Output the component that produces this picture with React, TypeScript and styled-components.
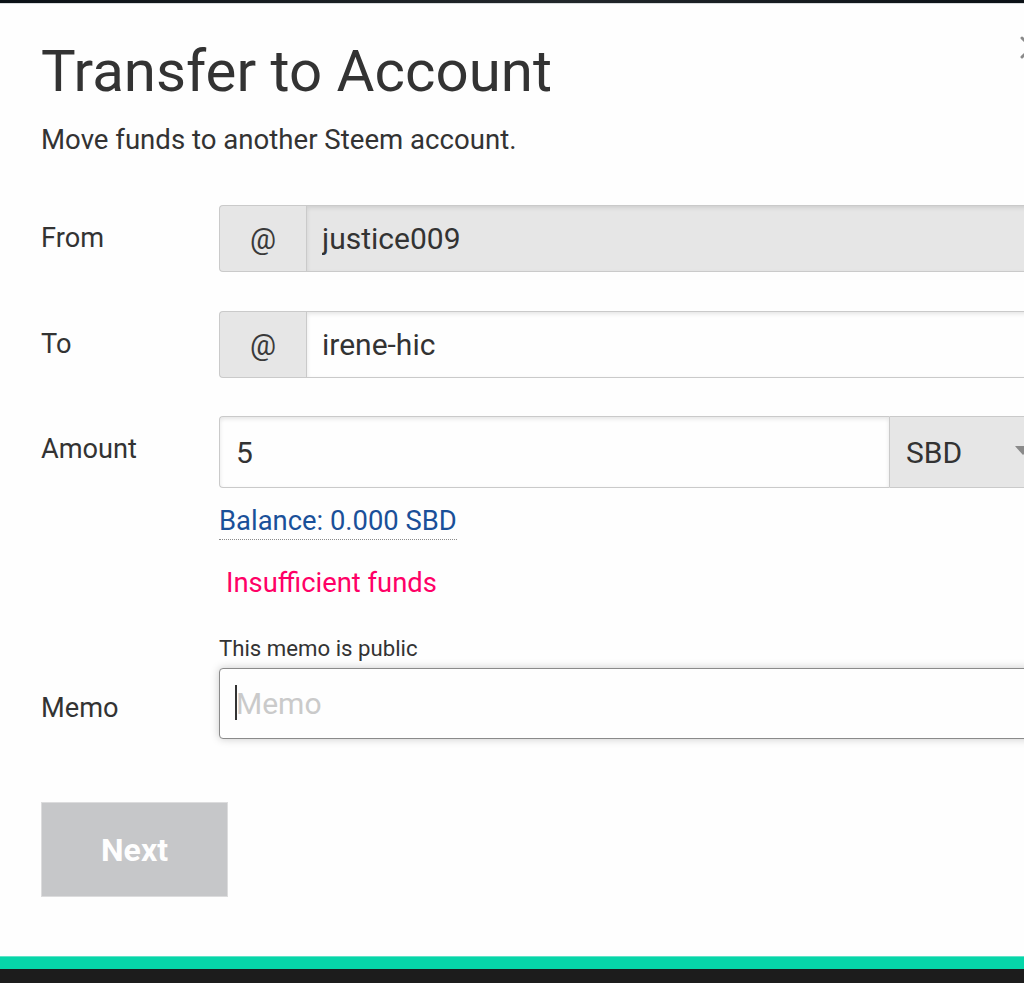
import React from "react";
import styled, { createGlobalStyle } from "styled-components";

function App() {
  return (
    <>
      <GlobalStyle />
      <Page>
        <TopStrip />
        <Modal>
          <CloseButton aria-label="Close">
            <svg width="26" height="26" viewBox="0 0 26 26">
              <path
                d="M3 4 L22 23 M3 23 L22 4"
                stroke="#8a8a8a"
                strokeWidth="3"
                strokeLinecap="round"
              />
            </svg>
          </CloseButton>
          <Title>Transfer to Account</Title>
          <Subtitle>Move funds to another Steem account.</Subtitle>

          <Row $top={47}>
            <Label $offset={15}>From</Label>
            <InputGroup>
              <Addon>@</Addon>
              <TextInput value="justice009" disabled readOnly $disabled />
            </InputGroup>
          </Row>

          <Row $top={39}>
            <Label $offset={15}>To</Label>
            <InputGroup>
              <Addon>@</Addon>
              <TextInput value="irene-hic" readOnly />
            </InputGroup>
          </Row>

          <Row $top={38}>
            <Label $offset={15}>Amount</Label>
            <Field>
              <AmountGroup>
                <AmountInput value="5" readOnly />
                <SelectWrap>
                  <AssetSelect defaultValue="SBD">
                    <option value="STEEM">STEEM</option>
                    <option value="SBD">SBD</option>
                  </AssetSelect>
                  {/* dropdown arrow */}
                  <Arrow width="16" height="9" viewBox="0 0 16 9">
                    <path d="M0 0 L16 0 L8 9 Z" fill="#8a8a8a" />
                  </Arrow>
                </SelectWrap>
              </AmountGroup>
              <Balance>Balance: 0.000 SBD</Balance>
              <ErrorText>Insufficient funds</ErrorText>
            </Field>
          </Row>

          <Row $top={33}>
            <Label $offset={56}>Memo</Label>
            <Field>
              <Note>This memo is public</Note>
              <MemoWrap>
                <MemoInput placeholder="Memo" readOnly />
                <Caret />
              </MemoWrap>
            </Field>
          </Row>

          <NextButton disabled>Next</NextButton>
        </Modal>
        <AccentBar />
        <BottomBar />
      </Page>
    </>
  );
}

const GlobalStyle = createGlobalStyle`
  html, body {
    margin: 0;
    padding: 0;
    overflow: hidden;
    background: #1c1c1c;
  }
  * {
    box-sizing: border-box;
  }
  body {
    font-family: Roboto, "Liberation Sans", Arial, sans-serif;
    color: #333333;
  }
`;

const Page = styled.div`
  display: flex;
  flex-direction: column;
  width: 1024px;
  height: 983px;
  overflow: hidden;
`;

const TopStrip = styled.div`
  flex: 0 0 4px;
  background: linear-gradient(90deg, #0b1116 0%, #1d2226 40%, #22272b 55%, #0b1116 100%);
  border-bottom: 1px solid #d9dcde;
`;

const Modal = styled.div`
  position: relative;
  flex: 1;
  width: 1098px;
  background: #fefefe;
  padding: 32px 42px 0 41px;
`;

const CloseButton = styled.button`
  position: absolute;
  top: 30px;
  left: 1019px;
  padding: 0;
  border: none;
  background: transparent;
  cursor: pointer;
  line-height: 0;
`;

const Title = styled.h1`
  margin: 0;
  font-size: 58.2px;
  line-height: 70px;
  font-weight: 400;
  color: #333333;
`;

const Subtitle = styled.p`
  margin: 16px 0 0;
  font-size: 27.6px;
  line-height: 36px;
  color: #333333;
`;

const Row = styled.div<{ $top: number }>`
  display: grid;
  grid-template-columns: 178px 1fr;
  margin-top: ${(p) => p.$top}px;
`;

const Label = styled.label<{ $offset: number }>`
  padding-top: ${(p) => p.$offset}px;
  font-size: 27.2px;
  line-height: 36px;
  color: #333333;
`;

const Field = styled.div`
  display: flex;
  flex-direction: column;
  align-items: flex-start;
`;

const InputGroup = styled.div`
  display: flex;
  height: 67px;
`;

const Addon = styled.span`
  display: flex;
  align-items: center;
  justify-content: center;
  width: 87px;
  background: #e6e6e6;
  border: 1px solid #cacaca;
  border-right: none;
  border-radius: 4px 0 0 4px;
  font-size: 29px;
  color: #3a3a3a;
`;

const TextInput = styled.input<{ $disabled?: boolean }>`
  flex: 1;
  min-width: 0;
  height: 100%;
  margin: 0;
  padding: 0 15px;
  border: 1px solid #cacaca;
  border-radius: 0;
  background: ${(p) => (p.$disabled ? "#e6e6e6" : "#fefefe")};
  box-shadow: inset 0 2px 4px rgba(10, 10, 10, 0.1);
  font-family: inherit;
  font-size: 30px;
  color: #333333;
  -webkit-text-fill-color: #333333;
  opacity: 1;
  outline: none;
`;

const AmountGroup = styled.div`
  display: flex;
  align-self: stretch;
  height: 72px;
`;

const AmountInput = styled.input`
  flex: 1;
  min-width: 0;
  margin: 0;
  padding: 0 16px;
  border: 1px solid #cacaca;
  border-right: none;
  border-radius: 4px 0 0 4px;
  background: #fefefe;
  box-shadow: inset 0 2px 4px rgba(10, 10, 10, 0.1);
  font-family: inherit;
  font-size: 30px;
  color: #333333;
  outline: none;
`;

const SelectWrap = styled.div`
  position: relative;
  width: 167px;
`;

const AssetSelect = styled.select`
  appearance: none;
  width: 100%;
  height: 100%;
  margin: 0;
  padding: 0 16px;
  border: 1px solid #cacaca;
  border-radius: 0 4px 4px 0;
  background: #e6e6e6;
  font-family: inherit;
  font-size: 30px;
  color: #333333;
  outline: none;
`;

const Arrow = styled.svg`
  position: absolute;
  top: 30px;
  left: 126px;
  pointer-events: none;
`;

const Balance = styled.span`
  display: inline-block;
  margin-top: 15px;
  font-size: 27.4px;
  line-height: 36px;
  color: #1a5099;
  border-bottom: 1px dotted #8a8a8a;
  cursor: pointer;
`;

const ErrorText = styled.div`
  margin-top: 25px;
  padding-left: 7px;
  font-size: 27.4px;
  line-height: 36px;
  color: #ff0066;
`;

const Note = styled.div`
  font-size: 22.2px;
  line-height: 28px;
  color: #333333;
`;

const MemoWrap = styled.div`
  position: relative;
  align-self: stretch;
  margin-top: 6px;
`;

const MemoInput = styled.input`
  display: block;
  width: 100%;
  height: 71px;
  margin: 0;
  padding: 0 16px;
  border: 1px solid #8a8a8a;
  border-radius: 4px;
  background: #fefefe;
  box-shadow: 0 0 9px #cacaca;
  font-family: inherit;
  font-size: 30px;
  color: #333333;
  outline: none;

  &::placeholder {
    color: #cacaca;
  }
`;

const Caret = styled.span`
  position: absolute;
  top: 17px;
  left: 16px;
  width: 2px;
  height: 35px;
  background: #333333;
`;

const NextButton = styled.button`
  display: block;
  width: 187px;
  height: 95px;
  margin-top: 63px;
  padding: 0;
  border: 1px solid #dcdcdd;
  border-radius: 0;
  background: #c6c7c9;
  font-family: inherit;
  font-size: 32px;
  font-weight: 700;
  color: #fefefe;
  cursor: not-allowed;
`;

const AccentBar = styled.div`
  flex: 0 0 13px;
  background: #06d6a9;
  border-top: 1px solid #5fe3c6;
`;

const BottomBar = styled.div`
  flex: 0 0 14px;
  background: #1c1c1c;
`;

export default App;
